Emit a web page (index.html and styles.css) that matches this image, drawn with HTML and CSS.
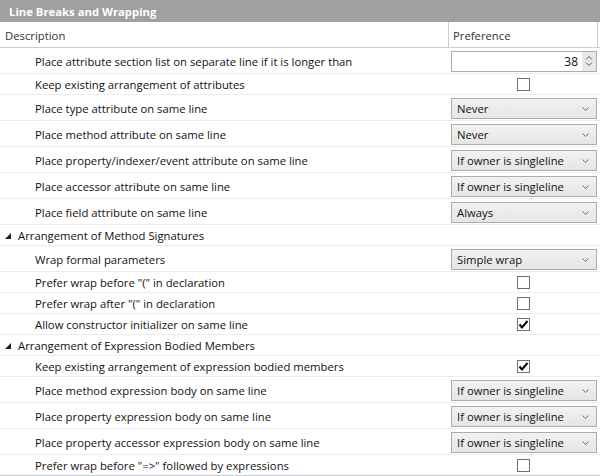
FILE: index.html
```html
<!DOCTYPE html>
<html>
<head>
<meta charset="utf-8">
<link rel="stylesheet" href="styles.css">
</head>
<body>
<div class="panel">
  <div class="title">Line Breaks and Wrapping</div>
  <div class="head">
    <div class="hc desc">Description</div>
    <div class="hc pref">Preference</div>
  </div>

  <div class="row tall">
    <div class="label">Place attribute section list on separate line if it is longer than</div>
    <div class="val">
      <div class="spin"><span class="num">38</span><span class="arrows"><svg width="8" height="12" viewBox="0 0 8 12"><polyline points="1,4.5 4,1.5 7,4.5" fill="none" stroke="#606060" stroke-width="1"/><polyline points="1,7.5 4,10.5 7,7.5" fill="none" stroke="#606060" stroke-width="1"/></svg></span></div>
    </div>
  </div>
  <div class="row">
    <div class="label">Keep existing arrangement of attributes</div>
    <div class="val center"><span class="cb"></span></div>
  </div>
  <div class="row tall">
    <div class="label">Place type attribute on same line</div>
    <div class="val"><div class="dd"><span>Never</span><svg class="chev" width="7" height="4" viewBox="0 0 7 4"><polyline points="0.5,0.5 3.5,3.5 6.5,0.5" fill="none" stroke="#6a6a6a" stroke-width="1"/></svg></div></div>
  </div>
  <div class="row tall">
    <div class="label">Place method attribute on same line</div>
    <div class="val"><div class="dd"><span>Never</span><svg class="chev" width="7" height="4" viewBox="0 0 7 4"><polyline points="0.5,0.5 3.5,3.5 6.5,0.5" fill="none" stroke="#6a6a6a" stroke-width="1"/></svg></div></div>
  </div>
  <div class="row tall">
    <div class="label">Place property/indexer/event attribute on same line</div>
    <div class="val"><div class="dd"><span>If owner is singleline</span><svg class="chev" width="7" height="4" viewBox="0 0 7 4"><polyline points="0.5,0.5 3.5,3.5 6.5,0.5" fill="none" stroke="#6a6a6a" stroke-width="1"/></svg></div></div>
  </div>
  <div class="row tall">
    <div class="label">Place accessor attribute on same line</div>
    <div class="val"><div class="dd"><span>If owner is singleline</span><svg class="chev" width="7" height="4" viewBox="0 0 7 4"><polyline points="0.5,0.5 3.5,3.5 6.5,0.5" fill="none" stroke="#6a6a6a" stroke-width="1"/></svg></div></div>
  </div>
  <div class="row tall">
    <div class="label">Place field attribute on same line</div>
    <div class="val"><div class="dd"><span>Always</span><svg class="chev" width="7" height="4" viewBox="0 0 7 4"><polyline points="0.5,0.5 3.5,3.5 6.5,0.5" fill="none" stroke="#6a6a6a" stroke-width="1"/></svg></div></div>
  </div>

  <div class="row">
    <div class="section"><svg class="tri" width="6" height="6" viewBox="0 0 6 6"><polygon points="6,0 6,6 0,6" fill="#1e1e1e"/></svg>Arrangement of Method Signatures</div>
    <div class="val"></div>
  </div>
  <div class="row tall">
    <div class="label">Wrap formal parameters</div>
    <div class="val"><div class="dd"><span>Simple wrap</span><svg class="chev" width="7" height="4" viewBox="0 0 7 4"><polyline points="0.5,0.5 3.5,3.5 6.5,0.5" fill="none" stroke="#6a6a6a" stroke-width="1"/></svg></div></div>
  </div>
  <div class="row">
    <div class="label">Prefer wrap before "(" in declaration</div>
    <div class="val center"><span class="cb"></span></div>
  </div>
  <div class="row">
    <div class="label">Prefer wrap after "(" in declaration</div>
    <div class="val center"><span class="cb"></span></div>
  </div>
  <div class="row">
    <div class="label">Allow constructor initializer on same line</div>
    <div class="val center"><span class="cb"><svg width="11" height="11" viewBox="0 0 11 11"><polyline points="1.5,5.5 4,8.5 9.5,2" fill="none" stroke="#000" stroke-width="2"/></svg></span></div>
  </div>

  <div class="row">
    <div class="section"><svg class="tri" width="6" height="6" viewBox="0 0 6 6"><polygon points="6,0 6,6 0,6" fill="#1e1e1e"/></svg>Arrangement of Expression Bodied Members</div>
    <div class="val"></div>
  </div>
  <div class="row">
    <div class="label">Keep existing arrangement of expression bodied members</div>
    <div class="val center"><span class="cb"><svg width="11" height="11" viewBox="0 0 11 11"><polyline points="1.5,5.5 4,8.5 9.5,2" fill="none" stroke="#000" stroke-width="2"/></svg></span></div>
  </div>
  <div class="row tall">
    <div class="label">Place method expression body on same line</div>
    <div class="val"><div class="dd"><span>If owner is singleline</span><svg class="chev" width="7" height="4" viewBox="0 0 7 4"><polyline points="0.5,0.5 3.5,3.5 6.5,0.5" fill="none" stroke="#6a6a6a" stroke-width="1"/></svg></div></div>
  </div>
  <div class="row tall">
    <div class="label">Place property expression body on same line</div>
    <div class="val"><div class="dd"><span>If owner is singleline</span><svg class="chev" width="7" height="4" viewBox="0 0 7 4"><polyline points="0.5,0.5 3.5,3.5 6.5,0.5" fill="none" stroke="#6a6a6a" stroke-width="1"/></svg></div></div>
  </div>
  <div class="row tall">
    <div class="label">Place property accessor expression body on same line</div>
    <div class="val"><div class="dd"><span>If owner is singleline</span><svg class="chev" width="7" height="4" viewBox="0 0 7 4"><polyline points="0.5,0.5 3.5,3.5 6.5,0.5" fill="none" stroke="#6a6a6a" stroke-width="1"/></svg></div></div>
  </div>
  <div class="row last">
    <div class="label">Prefer wrap before "=&gt;" followed by expressions</div>
    <div class="val center"><span class="cb"></span></div>
  </div>
</div>
</body>
</html>
```

FILE: styles.css
```css
* { box-sizing: border-box; }
html, body {
  margin: 0;
  padding: 0;
  background: #ffffff;
}
body {
  font-family: "Open Sans", "Noto Sans", sans-serif;
  font-size: 11.3px;
  color: #111111;
  width: 600px;
  height: 476px;
  overflow: hidden;
}
.panel {
  width: 600px;
  display: flex;
  flex-direction: column;
}
.title {
  height: 22px;
  background: #a0a0a0;
  color: #ffffff;
  font-weight: 700;
  padding-left: 9px;
  padding-top: 2px;
  line-height: 20px;
}
.head {
  height: 26px;
  display: grid;
  grid-template-columns: 449px 149px;
  border-bottom: 1px solid #c7cdd6;
}
.hc {
  display: flex;
  align-items: center;
  color: #333333;
  padding-top: 2px;
}
.desc {
  padding-left: 5px;
  border-right: 1px solid #c7cdd6;
}
.pref {
  padding-left: 4px;
  border-right: 1px solid #c7cdd6;
}
.row {
  height: 21px;
  display: grid;
  grid-template-columns: 449px 151px;
  align-items: center;
  border-bottom: 1px solid #ececec;
}
.row.tall { height: 26px; }
.row.last { border-bottom: 1px solid #c7cdd6; }
.label {
  padding-left: 35px;
  padding-top: 2px;
  white-space: nowrap;
  overflow: hidden;
  line-height: 16px;
}
.section {
  display: flex;
  align-items: center;
  padding-left: 5px;
  padding-top: 2px;
  white-space: nowrap;
  line-height: 16px;
}
.tri {
  margin-right: 7px;
  margin-top: -1px;
}
.val {
  padding: 1px 3px 0 2px;
  display: flex;
  align-items: center;
  height: 100%;
}
.val.center { justify-content: center; }
.cb {
  width: 13px;
  height: 13px;
  border: 1px solid #707070;
  background: #ffffff;
  display: flex;
  align-items: center;
  justify-content: center;
  margin-left: -1px;
}
.dd {
  width: 146px;
  height: 21px;
  border: 1px solid #acacac;
  background: linear-gradient(#f2f2f2, #e5e5e5);
  display: flex;
  align-items: center;
  justify-content: space-between;
  padding: 1px 7px 0 5px;
  line-height: 16px;
  color: #111111;
}
.chev { flex: none; }
.spin {
  width: 146px;
  height: 21px;
  border: 1px solid #acacac;
  background: #ffffff;
  display: flex;
  align-items: stretch;
}
.num {
  flex: 1;
  text-align: right;
  padding-right: 4px;
  padding-top: 1px;
  line-height: 18px;
  font-size: 12px;
}
.arrows {
  width: 14px;
  background: #e8e8e8;
  display: flex;
  align-items: center;
  justify-content: center;
}
```
